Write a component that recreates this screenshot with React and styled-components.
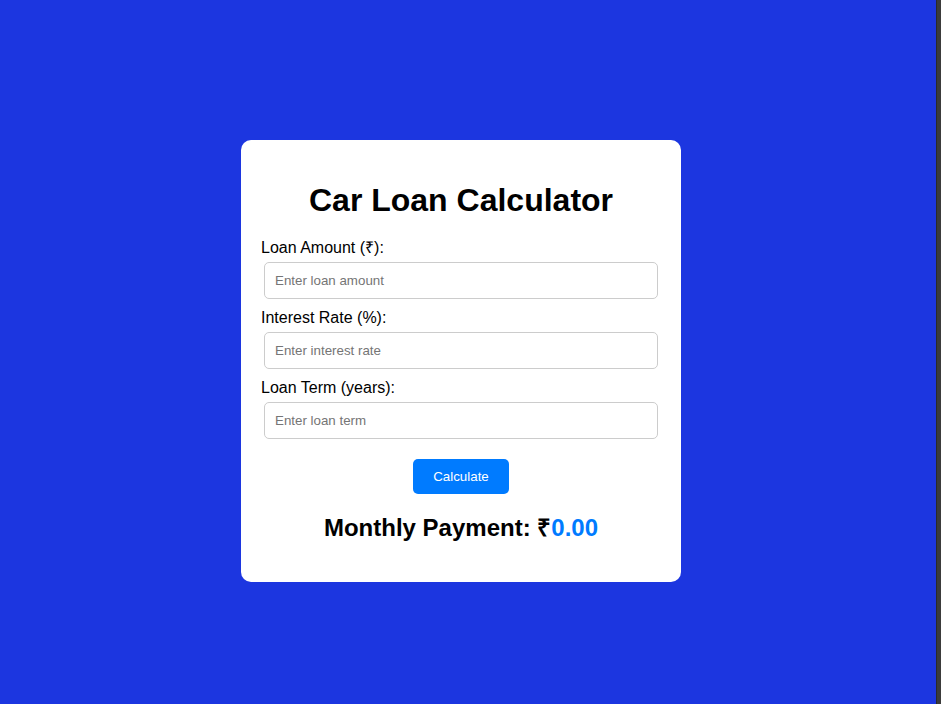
import React, { useState } from "react";
import styled, { createGlobalStyle } from "styled-components";

const Global = createGlobalStyle`
  html, body { margin: 0; padding: 0; }
  body {
    background: #1c36e0;
    font-family: "Liberation Sans", Arial, sans-serif;
    min-height: 100vh;
  }
`;

const Page = styled.div`
  min-height: 100vh;
  box-sizing: border-box;
  padding: 140px 0 0 241px;
  display: flex;
  align-items: flex-start;
`;

const Card = styled.div`
  width: 440px;
  box-sizing: border-box;
  background: #ffffff;
  border-radius: 10px;
  padding: 20px;
`;

const Title = styled.h1`
  margin: 22px 0 20px;
  font-size: 32px;
  font-weight: bold;
  line-height: 37px;
  text-align: center;
  color: #000;
`;

const Field = styled.div`
  display: flex;
  flex-direction: column;
  margin-bottom: 10px;
`;

const Label = styled.label`
  display: block;
  font-size: 16px;
  line-height: 18px;
  color: #000;
  margin-bottom: 5px;
`;

const Input = styled.input`
  box-sizing: border-box;
  width: 394px;
  height: 37px;
  margin: 0 3px;
  padding: 10px;
  border: 1px solid #cccccc;
  border-radius: 5px;
  font-family: "Liberation Sans", Arial, sans-serif;
  font-size: 13.333px;
  color: #000;
  outline: none;
  &::placeholder { color: #757575; }
`;

const ButtonRow = styled.div`
  display: flex;
  justify-content: center;
  margin-top: 20px;
`;

const Button = styled.button`
  height: 35px;
  padding: 0 20px;
  background: #007bff;
  color: #fff;
  border: none;
  border-radius: 5px;
  font-family: "Liberation Sans", Arial, sans-serif;
  font-size: 13.333px;
  cursor: pointer;
`;

const Result = styled.h3`
  margin: 20px 0 20px;
  font-size: 24px;
  line-height: 28px;
  font-weight: bold;
  text-align: center;
  color: #000;
`;

const Amount = styled.span`
  color: #007bff;
`;

const FrameEdge = styled.div`
  position: fixed;
  top: 0;
  right: 0;
  width: 5px;
  height: 100vh;
  background: #3b3b3b;
  border-left: 1px solid #2a2a2a;
  box-sizing: border-box;
`;

export default function App() {
  const [amount, setAmount] = useState("");
  const [rate, setRate] = useState("");
  const [term, setTerm] = useState("");
  const [payment, setPayment] = useState(0);

  const calculate = () => {
    const p = parseFloat(amount);
    const r = parseFloat(rate) / 100 / 12;
    const n = parseFloat(term) * 12;
    if (!p || !n) { setPayment(0); return; }
    if (!r) { setPayment(p / n); return; }
    const m = (p * r * Math.pow(1 + r, n)) / (Math.pow(1 + r, n) - 1);
    setPayment(isFinite(m) ? m : 0);
  };

  return (
    <>
      <Global />
      <Page>
        <Card>
          <Title>Car Loan Calculator</Title>
          <Field>
            <Label>Loan Amount (₹):</Label>
            <Input placeholder="Enter loan amount" value={amount} onChange={(e) => setAmount(e.target.value)} />
          </Field>
          <Field>
            <Label>Interest Rate (%):</Label>
            <Input placeholder="Enter interest rate" value={rate} onChange={(e) => setRate(e.target.value)} />
          </Field>
          <Field>
            <Label>Loan Term (years):</Label>
            <Input placeholder="Enter loan term" value={term} onChange={(e) => setTerm(e.target.value)} />
          </Field>
          <ButtonRow>
            <Button onClick={calculate}>Calculate</Button>
          </ButtonRow>
          <Result>
            Monthly Payment: ₹<Amount>{payment.toFixed(2)}</Amount>
          </Result>
        </Card>
      </Page>
      <FrameEdge />
    </>
  );
}
